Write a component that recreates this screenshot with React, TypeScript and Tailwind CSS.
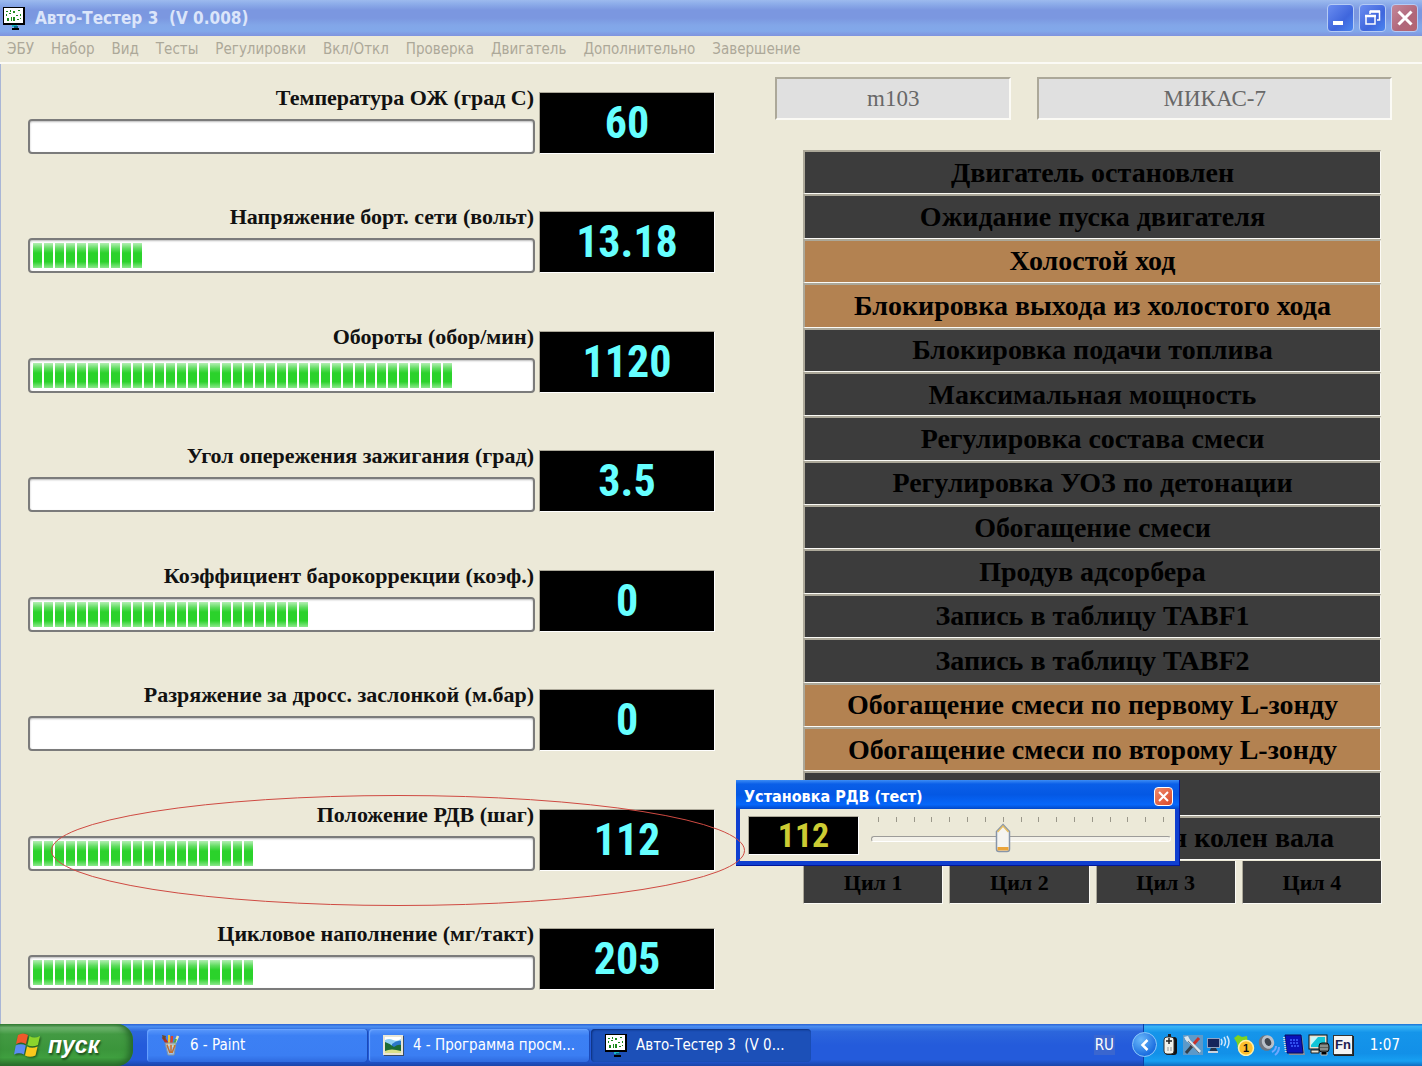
import React, { useState } from 'react';
import clsx from 'clsx';

interface Gauge {
    label: string;
    value: string;
    segments: number;
    marked?: boolean;
}

interface EngineState {
    label: string;
    active?: boolean;
}

const SEGMENTS_TOTAL = 45;
const STEP_MAX = 256;

const MENU = ['ЭБУ', 'Набор', 'Вид', 'Тесты', 'Регулировки', 'Вкл/Откл', 'Проверка', 'Двигатель', 'Дополнительно', 'Завершение'];

const GAUGES: Gauge[] = [
    { label: 'Температура ОЖ (град С)', value: '60', segments: 0 },
    { label: 'Напряжение борт. сети (вольт)', value: '13.18', segments: 10 },
    { label: 'Обороты (обор/мин)', value: '1120', segments: 38 },
    { label: 'Угол опережения зажигания (град)', value: '3.5', segments: 0 },
    { label: 'Коэффициент барокоррекции (коэф.)', value: '0', segments: 25 },
    { label: 'Разряжение за дросс. заслонкой (м.бар)', value: '0', segments: 0 },
    { label: 'Положение РДВ (шаг)', value: '112', segments: 20, marked: true },
    { label: 'Цикловое наполнение (мг/такт)', value: '205', segments: 20 },
];

const STATES: EngineState[] = [
    { label: 'Двигатель остановлен' },
    { label: 'Ожидание пуска двигателя' },
    { label: 'Холостой ход', active: true },
    { label: 'Блокировка выхода из холостого хода', active: true },
    { label: 'Блокировка подачи топлива' },
    { label: 'Максимальная мощность' },
    { label: 'Регулировка состава смеси' },
    { label: 'Регулировка УОЗ по детонации' },
    { label: 'Обогащение смеси' },
    { label: 'Продув адсорбера' },
    { label: 'Запись в таблицу TABF1' },
    { label: 'Запись в таблицу TABF2' },
    { label: 'Обогащение смеси по первому L-зонду', active: true },
    { label: 'Обогащение смеси по второму L-зонду', active: true },
    { label: '' },
    { label: 'Синхронизация вращения колен вала' },
];

const CYLINDERS = ['Цил 1', 'Цил 2', 'Цил 3', 'Цил 4'];

function TesterIcon() {
    return (
        <svg viewBox="0 0 22 23" className="w-[22px] h-[23px] shrink-0" aria-hidden="true">
            <rect x="0" y="0" width="22" height="18" fill="#000" />
            <rect x="1" y="1" width="19" height="15" fill="#fff" />
            <g fill="#1b8a1b">
                <rect x="3" y="4" width="2" height="1" />
                <rect x="7" y="3" width="1" height="2" />
                <rect x="10" y="4" width="2" height="2" />
                <rect x="15" y="3" width="2" height="1" />
                <rect x="3" y="7" width="1" height="2" />
                <rect x="6" y="6" width="2" height="1" />
                <rect x="13" y="8" width="2" height="1" />
                <rect x="17" y="7" width="1" height="2" />
                <rect x="4" y="11" width="2" height="3" />
                <rect x="8" y="10" width="1" height="4" />
                <rect x="10" y="10" width="2" height="4" />
                <rect x="14" y="12" width="2" height="1" />
                <rect x="17" y="11" width="1" height="1" />
            </g>
            <rect x="9" y="18" width="5" height="2" fill="#16b8c4" />
            <rect x="11" y="19" width="4" height="2" fill="#0b5f8a" />
            <rect x="9" y="21" width="7" height="2" fill="#000" />
        </svg>
    );
}

function WindowsFlag() {
    return (
        <svg viewBox="0 0 28 26" className="w-7 h-[26px] drop-shadow-[1px_1px_1px_#1c4d1c]" aria-hidden="true">
            <path d="M4 3 Q9 0 14 3 L12 12 Q7 9 2 12 Z" fill="#f0592a" />
            <path d="M15.5 4 Q20 7 26 4 L24 13 Q18 15.500 13.500 13 Z" fill="#8bd42c" />
            <path d="M1.700 13.500 Q7 11 11.800 13.500 L10 22.500 Q5 20 0 22.500 Z" fill="#5a8cf2" />
            <path d="M13 14.500 Q18 17 23.600 14.500 L21.500 23.500 Q16 26 11 23.500 Z" fill="#fbc81c" />
        </svg>
    );
}

function PaintIcon() {
    return (
        <svg viewBox="0 0 20 22" className="w-5 h-[22px] shrink-0" aria-hidden="true">
            <path d="M2 3 L8 12" stroke="#b8321e" strokeWidth="3" />
            <path d="M1 1 L5 2 L4 6 L2 5 Z" fill="#6b4a2b" />
            <path d="M8 1 V12" stroke="#e8c23a" strokeWidth="2" />
            <path d="M11 2 L10 13" stroke="#d7442b" strokeWidth="2.500" />
            <path d="M17 2 L12 13" stroke="#efe6b0" strokeWidth="2.500" />
            <path d="M15 5 L12 12" stroke="#4ca64a" strokeWidth="2" />
            <path d="M4 9 H15 L13 21 H7 Z" fill="#cfe0e6" fillOpacity="0.7" stroke="#7f96a6" />
            <path d="M6 11 L9 19 M10 11 V19 M14 11 L11 19" stroke="#c4702e" strokeWidth="1.500" />
        </svg>
    );
}

function PictureIcon() {
    return (
        <svg viewBox="0 0 21 21" className="w-[21px] h-[21px] shrink-0" aria-hidden="true">
            <rect x="1" y="1" width="20" height="20" fill="#3b4b63" />
            <rect x="0" y="0" width="20" height="20" fill="#e9e6d6" />
            <rect x="2" y="2" width="16" height="16" fill="#8fd0f3" />
            <path d="M2 5 Q6 3 10 5 T18 4 V2 H2 Z" fill="#fff" />
            <path d="M9 9 Q14 5 18 6 V12 H9 Z" fill="#2c78c8" />
            <path d="M2 7 Q8 9 11 12 Q15 9 18 10 V16 H2 Z" fill="#1c6b34" />
            <path d="M2 16 Q8 13 18 16 V18 H2 Z" fill="#d9e08a" />
        </svg>
    );
}

function MouseIcon() {
    return (
        <svg viewBox="0 0 20 22" className="w-5 h-[22px]" aria-hidden="true">
            <rect x="5" y="3" width="12" height="18" rx="3" fill="#111" />
            <rect x="4" y="3" width="10" height="17" rx="3" fill="#f1f1ea" stroke="#333" />
            <path d="M6 7 H12 M9 4 V10" stroke="#222" strokeWidth="1.500" />
            <path d="M8 13 V17 M11 13 V17" stroke="#999" />
            <path d="M8 3 V0 H11 V3" fill="#222" />
        </svg>
    );
}

function ToolsIcon() {
    return (
        <svg viewBox="0 0 20 22" className="w-5 h-[22px]" aria-hidden="true">
            <rect width="20" height="20" y="1" fill="#7d9dbb" fillOpacity="0.7" />
            <path d="M16 4 L8 13" stroke="#c8322c" strokeWidth="3" />
            <path d="M9 12 L3 19" stroke="#34404c" strokeWidth="3" />
            <path d="M3 4 L17 18" stroke="#dfe6ec" strokeWidth="3" />
            <path d="M4 6 L16 19" stroke="#5b6a78" strokeWidth="1" />
            <path d="M1 3 L5 2 L7 6 L4 8 Z" fill="#dde5ec" />
        </svg>
    );
}

function NetworkIcon() {
    return (
        <svg viewBox="0 0 24 22" className="w-6 h-[22px]" aria-hidden="true">
            <rect x="1" y="4" width="13" height="10" fill="#8fa3c4" />
            <rect x="2" y="5" width="11" height="8" fill="#16245c" />
            <path d="M5 14 H10 L12 18 H3 Z" fill="#26344d" />
            <path d="M2 18 H12" stroke="#c9d2de" strokeWidth="2" />
            <path d="M15 5 Q17 8 15 11 M18 3 Q21 8 18 12 M21 2 Q25 8 21 14" fill="none" stroke="#cfe6fa" strokeWidth="1.500" />
        </svg>
    );
}

function MessengerIcon() {
    return (
        <svg viewBox="0 0 22 22" className="w-[22px] h-[22px]" aria-hidden="true">
            <path d="M1 4 L5 1 L9 3 L14 2 L15 9 L11 14 L5 15 L4 9 Z" fill="#7ed321" />
            <circle cx="13" cy="14" r="7.500" fill="#fdbf2d" stroke="#fff0a8" strokeWidth="1.500" />
            <text x="13" y="18" textAnchor="middle" className="font-['Liberation_Sans'] text-[11px] font-bold" fill="#111">1</text>
        </svg>
    );
}

function SpeakerIcon() {
    return (
        <svg viewBox="0 0 22 22" className="w-[22px] h-[22px]" aria-hidden="true">
            <ellipse cx="8" cy="9" rx="7" ry="8" fill="#6e7681" transform="rotate(-25 8 9)" />
            <ellipse cx="10" cy="8" rx="6" ry="7" fill="#b9c0c9" transform="rotate(-25 10 8)" />
            <ellipse cx="10" cy="8" rx="3" ry="4" fill="#3f4650" transform="rotate(-25 10 8)" />
            <path d="M14 18 Q18 16 18 12 M17 21 Q21 18 21 13" fill="none" stroke="#6fa8ff" strokeWidth="2" />
        </svg>
    );
}

function ChipIcon() {
    return (
        <svg viewBox="0 0 22 22" className="w-[22px] h-[22px]" aria-hidden="true">
            <path d="M4 2 H19 L22 21 H6 Z" fill="#8a8f98" />
            <path d="M2 1 H18 L20 19 H4 Z" fill="#0a12b8" stroke="#050a60" />
            <path d="M7 6 H15 M7 9 H15 M8 12 H16" stroke="#3f66ff" strokeWidth="1.500" strokeDasharray="2 1" />
            <path d="M1 3 L3 19" stroke="#e3e3e3" strokeDasharray="1 1" strokeWidth="2" />
        </svg>
    );
}

function DisplayIcon() {
    return (
        <svg viewBox="0 0 22 22" className="w-[22px] h-[22px]" aria-hidden="true">
            <rect x="1" y="1" width="18" height="14" fill="#e7e3d4" stroke="#111" />
            <rect x="3" y="3" width="14" height="10" fill="#12c6d8" />
            <path d="M3 3 H10 L3 11 Z" fill="#c8f7fa" />
            <path d="M3 16 H11 V19 H3 Z" fill="#e7e3d4" stroke="#222" />
            <rect x="11" y="9" width="10" height="9" rx="3" fill="#5a5f5c" stroke="#111" />
            <path d="M12 12 H20 M12 15 H20 M13 18 V21 H19 V18" stroke="#b7bcb8" />
        </svg>
    );
}

function CloseGlyph({ className }: { className: string }) {
    return (
        <svg viewBox="0 0 16 16" className={className} aria-hidden="true">
            <path d="M1.500 1.500 L14.500 14.500 M14.500 1.500 L1.500 14.500" stroke="#fff" strokeWidth="3" />
        </svg>
    );
}

function TitleBar() {
    const button = 'w-[27px] h-7 rounded border border-[#b5cbf5] flex items-center justify-center';

    return (
        <header className="h-9 pl-[3px] pr-1 flex items-center bg-[linear-gradient(#9dbaee_0%,#8eaeea_10%,#7b97e0_28%,#7b97e0_50%,#82a6e8_70%,#82a8ea_86%,#7f93de_100%)]">
            <TesterIcon />
            <h1 className="flex-1 ml-2.5 text-[17px] leading-9 font-bold text-[#dbe5fa] whitespace-pre font-['DejaVu_Sans_Condensed','DejaVu_Sans',sans-serif]">
                Авто-Тестер 3  (V 0.008)
            </h1>
            <div className="flex gap-[5px]">
                <button type="button" aria-label="Свернуть" className={clsx(button, 'bg-[linear-gradient(135deg,#6a8df0,#3f66dd_60%,#4a86f0)]')}>
                    <svg viewBox="0 0 16 16" className="w-4 h-4" aria-hidden="true">
                        <rect x="0" y="11" width="10" height="4" fill="#fff" />
                    </svg>
                </button>
                <button type="button" aria-label="Восстановить" className={clsx(button, 'bg-[linear-gradient(135deg,#6a8df0,#3f66dd_60%,#4a86f0)]')}>
                    <svg viewBox="0 0 16 16" className="w-4 h-4" aria-hidden="true">
                        <path d="M5 4 V1.500 H14.500 V10 H12" fill="none" stroke="#fff" strokeWidth="1.500" />
                        <path d="M5 1.500 H15" stroke="#fff" strokeWidth="2.500" />
                        <rect x="1" y="6" width="9" height="8" fill="none" stroke="#fff" strokeWidth="1.500" />
                        <path d="M0 6 H11" stroke="#fff" strokeWidth="2.500" />
                    </svg>
                </button>
                <button type="button" aria-label="Закрыть" className={clsx(button, 'bg-[linear-gradient(135deg,#c48799,#b0677a_60%,#b5656f)]')}>
                    <CloseGlyph className="w-4 h-4" />
                </button>
            </div>
        </header>
    );
}

function MenuBar() {
    return (
        <nav className="h-[28px] px-[7px] flex items-center gap-[17px] border-b-2 border-[#fbfaf5]">
            {MENU.map((item) => (
                <button key={item} type="button" className="text-[15px] leading-6 text-[#aca899] font-['DejaVu_Sans_Condensed','DejaVu_Sans',sans-serif]">
                    {item}
                </button>
            ))}
        </nav>
    );
}

function GaugeRow({ label, value, segments, marked }: Gauge) {
    return (
        <div className="relative flex items-end gap-1">
            <div className="flex-1 min-w-0">
                <div className="h-[42px] pr-px leading-[42px] text-right text-[22px] font-bold text-[#111] whitespace-nowrap">{label}</div>
                <div
                    role="progressbar"
                    aria-label={label}
                    aria-valuenow={segments}
                    aria-valuemax={SEGMENTS_TOTAL}
                    className="h-[35px] rounded border-2 border-[#7b7b7b] bg-white p-[3px] shadow-[inset_0_1px_2px_#bbb] grid grid-cols-[repeat(45,minmax(0,1fr))] gap-0.5"
                >
                    {Array.from({ length: segments }, (_, i) => (
                        <div key={i} className="bg-[linear-gradient(#b4efb4_0%,#5fdc5f_22%,#2bd22b_40%,#2bd22b_75%,#8ce88c_100%)]" />
                    ))}
                </div>
            </div>
            <output className="w-44 h-[62px] bg-black border-t border-l border-t-[#aca899] border-l-[#aca899] border-b border-r border-b-white border-r-white text-center text-[44px] leading-[60px] font-bold text-[#66ffff] font-['Roboto_Condensed','Roboto','Liberation_Sans',sans-serif]">
                {value}
            </output>
            {marked && (
                <svg viewBox="0 0 694 111" preserveAspectRatio="none" className="absolute z-20 left-[23px] top-px h-[111px] w-[calc(100%+7px)] pointer-events-none" aria-hidden="true">
                    <ellipse cx="347" cy="55.500" rx="346.500" ry="55" fill="none" stroke="#cf4a42" />
                </svg>
            )}
        </div>
    );
}

function StateRow({ label, active }: EngineState) {
    return (
        <li
            className={clsx(
                'flex items-center justify-center overflow-hidden whitespace-nowrap text-[28px] leading-10 font-bold text-black border-t-2 border-l-2 border-b border-r border-t-[#aca899] border-l-[#aca899] border-b-[#fbfaf5] border-r-[#fbfaf5]',
                active ? 'bg-[#b38251]' : 'bg-[#3c3c3c]'
            )}
        >
            {label}
        </li>
    );
}

function StepDialog() {
    const [step, setStep] = useState(112);
    const percent = (step / STEP_MAX) * 100;

    return (
        <section
            aria-label="Установка РДВ (тест)"
            className="absolute z-10 left-[735px] top-[716px] w-[444px] px-1 pb-1 bg-[#0f3fd0] border-b border-r border-[#00169b] font-['DejaVu_Sans_Condensed','DejaVu_Sans',sans-serif]"
        >
            <div className="-mx-1 h-[29px] pl-2 pr-1.5 flex items-center justify-between bg-[linear-gradient(#3c8cf5_0%,#0a5fe8_14%,#0458e4_50%,#0667fa_85%,#0248c8_100%)]">
                <h2 className="pt-1 text-[16px] leading-6 font-bold text-white">Установка РДВ (тест)</h2>
                <button type="button" aria-label="Закрыть" className="mt-1 w-[19px] h-[19px] rounded-sm border border-white bg-[linear-gradient(135deg,#f08a6a,#d8482a)] flex items-center justify-center">
                    <CloseGlyph className="w-[11px] h-[11px]" />
                </button>
            </div>
            <div className="bg-[#ece9d8] h-[52px] pl-2 pr-1 flex items-center gap-3">
                <output className="w-[111px] h-[39px] bg-black border border-t-[#aca899] border-l-[#aca899] border-b-white border-r-white text-center text-[34px] leading-[37px] font-bold text-[#cccc33] font-['Roboto_Condensed','Roboto','Liberation_Sans',sans-serif]">
                    {step}
                </output>
                <div className="relative flex-1 h-10">
                    <div className="flex justify-between px-[7px] pt-0.5">
                        {Array.from({ length: 17 }, (_, i) => (
                            <div key={i} className="w-px h-[5px] bg-[#9a978a]" />
                        ))}
                    </div>
                    <div className="mt-[14px] h-[6px] rounded-sm border border-t-[#9d9c99] border-l-[#9d9c99] border-b-white border-r-white bg-[#f3f1e9]" />
                    <div className="absolute inset-x-[7px] top-2 h-[30px] pointer-events-none">
                        <svg viewBox="0 0 16 30" className="absolute -ml-2 w-4 h-[30px]" style={{ left: `${percent}%` }} aria-hidden="true">
                            <path d="M8 1.500 L14.500 8.500 V26 Q14.500 28.500 12 28.500 H4 Q1.500 28.500 1.500 26 V8.500 Z" fill="#f5f4f0" stroke="#8795a8" strokeWidth="1.500" />
                            <path d="M2.500 9 L8 3 L13.500 9" fill="none" stroke="#e5bd62" strokeWidth="1.500" />
                            <path d="M2.500 24 H13.500 V27.500 H2.500 Z" fill="#eaa43a" />
                        </svg>
                    </div>
                    <input
                        type="range"
                        min={0}
                        max={STEP_MAX}
                        value={step}
                        onChange={(e) => setStep(Number(e.target.value))}
                        aria-label="Положение РДВ"
                        className="absolute inset-0 w-full h-full opacity-0 cursor-pointer"
                    />
                </div>
            </div>
        </section>
    );
}

function TaskButton({ icon, title, active }: { icon: React.ReactNode; title: string; active?: boolean }) {
    return (
        <button
            type="button"
            className={clsx(
                'w-[220px] h-[33px] pl-3.5 pr-2 rounded-sm flex items-center gap-[9px] text-left text-[15px] leading-5 text-white whitespace-pre',
                active
                    ? 'bg-[#1c50b8] shadow-[inset_1px_1px_2px_#0c2f7c]'
                    : 'bg-[linear-gradient(#5a98fb,#3c80f4_20%,#3b7ef3_80%,#2f6be0)] shadow-[inset_1px_1px_1px_#6aa4ff,1px_0_1px_#1a48b4]'
            )}
        >
            {icon}
            {title}
        </button>
    );
}

function Taskbar() {
    return (
        <footer className="h-[42px] flex items-center bg-[linear-gradient(#2a62d4_0%,#4a8df0_6%,#2c66dc_18%,#245bdb_50%,#245bdb_85%,#1a44a8_100%)] font-['DejaVu_Sans_Condensed','DejaVu_Sans',sans-serif]">
            <button
                type="button"
                className="w-[133px] h-full pl-[14px] flex items-center gap-1.5 rounded-r-2xl bg-[linear-gradient(#3a8a3a_0%,#74b874_8%,#439a43_24%,#3b953b_60%,#3f9f3f_80%,#2c702c_100%)] shadow-[inset_-4px_0_6px_#26682a] text-white text-[23px] leading-8 font-bold italic font-['Liberation_Sans',sans-serif]"
            >
                <WindowsFlag />
                <span className="[text-shadow:1px_2px_2px_#1c4d1c]">пуск</span>
            </button>
            <div className="ml-3.5 flex gap-0.5">
                <TaskButton icon={<PaintIcon />} title="6 - Paint" />
                <TaskButton icon={<PictureIcon />} title="4 - Программа просм..." />
                <TaskButton icon={<TesterIcon />} title="Авто-Тестер 3  (V 0..." active />
            </div>
            <span className="ml-auto mr-[28px] px-px bg-[#3a66cf] text-[15px] leading-5 text-white">RU</span>
            <div className="relative h-full w-[279px] pl-4 pr-[22px] flex items-center gap-[3px] border-l border-[#0c3fa6] bg-[linear-gradient(#1a6fd4_0%,#38b4f6_6%,#1595ea_20%,#1290e8_70%,#17a0f2_88%,#0f6cc0_100%)]">
                <button type="button" aria-label="Показать скрытые значки" className="absolute -left-3 top-2 w-[25px] h-[25px] rounded-full border border-[#8cc8fa] bg-[radial-gradient(circle_at_35%_30%,#6ab8fa,#1c6fe0_70%)] flex items-center justify-center">
                    <svg viewBox="0 0 12 12" className="w-3 h-3" aria-hidden="true">
                        <path d="M8.500 1 L3.500 6 L8.500 11" fill="none" stroke="#fff" strokeWidth="2.500" />
                    </svg>
                </button>
                <MouseIcon />
                <ToolsIcon />
                <NetworkIcon />
                <MessengerIcon />
                <SpeakerIcon />
                <ChipIcon />
                <DisplayIcon />
                <span className="w-5 h-5 flex items-center justify-center bg-[#f4f4f4] border border-[#333] shadow-[1px_1px_0_#222] text-[13px] leading-4 font-bold text-[#1c2050] font-['Liberation_Sans',sans-serif]">Fn</span>
                <time className="ml-auto text-[15px] leading-5 text-white">1:07</time>
            </div>
        </footer>
    );
}

export default function App() {
    const field = 'min-w-0 h-[43px] text-center text-[23px] leading-10 text-[#686868] bg-[#e0e0e0] border-2 border-t-[#aca899] border-l-[#aca899] border-b-[#fbfaf5] border-r-[#fbfaf5]';

    return (
        <div className="min-h-screen flex flex-col bg-[#ece9d8] font-['Liberation_Serif',serif]">
            <TitleBar />
            <MenuBar />
            <main className="relative flex-1 flex gap-[60px] pl-[27px] pr-[30px] pt-[13px] border-l border-[#a9b6d6]">
                <div className="flex-[687] min-w-0 flex flex-col justify-between pb-[34px]">
                    {GAUGES.map((gauge) => (
                        <GaugeRow key={gauge.label} {...gauge} />
                    ))}
                </div>
                <div className="flex-[617] min-w-0 flex flex-col pb-[120px]">
                    <div className="flex gap-[26px]">
                        <input readOnly aria-label="Модель" value="m103" className={clsx(field, 'flex-[236]')} />
                        <input readOnly aria-label="Блок управления" value="МИКАС-7" className={clsx(field, 'flex-[356]')} />
                    </div>
                    <ul className="flex-1 mt-[30px] ml-7 mr-[11px] grid auto-rows-fr">
                        {STATES.map((state, i) => (
                            <StateRow key={i} {...state} />
                        ))}
                    </ul>
                    <ul className="mt-px ml-7 mr-[10px] grid grid-cols-4 gap-[6px]">
                        {CYLINDERS.map((name) => (
                            <li key={name} className="h-[43px] text-center text-[22px] leading-[43px] font-bold text-black bg-[#3c3c3c] border-l border-l-[#aca899] border-b border-b-[#fbfaf5] border-r border-r-[#fbfaf5]">
                                {name}
                            </li>
                        ))}
                    </ul>
                </div>
                <StepDialog />
            </main>
            <Taskbar />
        </div>
    );
}
